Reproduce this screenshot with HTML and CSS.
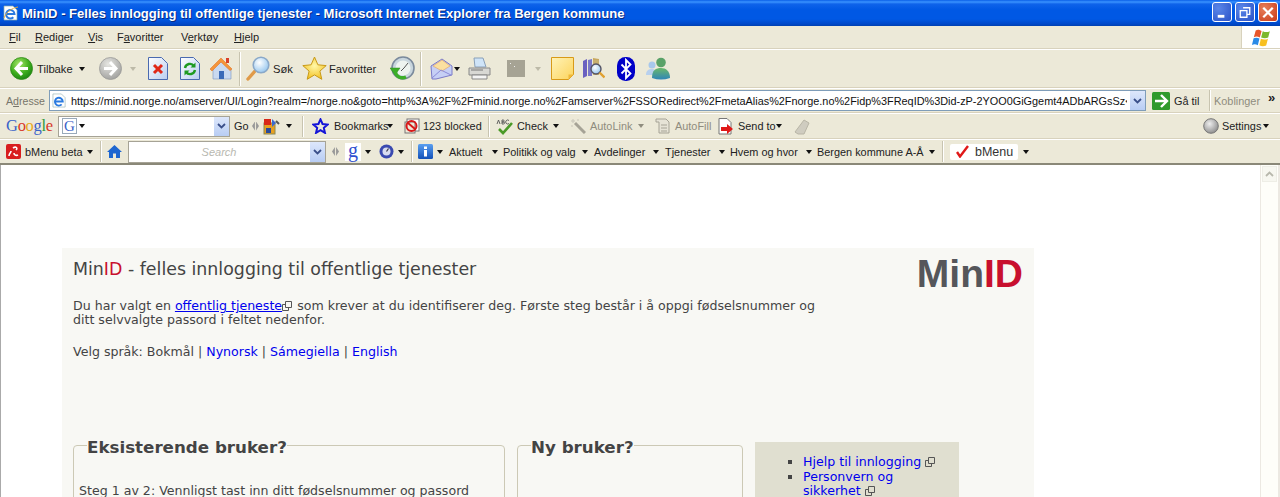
FILE: index.html
```html
<!DOCTYPE html>
<html lang="no">
<head>
<meta charset="utf-8">
<title>MinID</title>
<link rel="stylesheet" href="styles.css">
</head>
<body>
<svg class="defs" width="0" height="0" aria-hidden="true">
  <defs>
    <radialGradient id="gGreen" cx=".4" cy=".3" r=".8"><stop offset="0" stop-color="#a8e66a"/><stop offset=".55" stop-color="#3fae1e"/><stop offset="1" stop-color="#127a10"/></radialGradient>
    <radialGradient id="gGrey" cx=".4" cy=".3" r=".8"><stop offset="0" stop-color="#e6e6e2"/><stop offset="1" stop-color="#9a9a98"/></radialGradient>
    <linearGradient id="gDoc" x1="0" y1="0" x2="1" y2="1"><stop offset="0" stop-color="#fff"/><stop offset="1" stop-color="#b9cdf0"/></linearGradient>
    <radialGradient id="gStar" cx=".5" cy=".4" r=".7"><stop offset="0" stop-color="#fff8a8"/><stop offset="1" stop-color="#f2b90e"/></radialGradient>
    <linearGradient id="gNote" x1="0" y1="0" x2="1" y2="1"><stop offset="0" stop-color="#fff3b8"/><stop offset="1" stop-color="#fcd45c"/></linearGradient>
    <radialGradient id="gLens" cx=".4" cy=".35" r=".7"><stop offset="0" stop-color="#fff"/><stop offset="1" stop-color="#92c4ee"/></radialGradient>
    <radialGradient id="gKnob" cx=".4" cy=".35" r=".7"><stop offset="0" stop-color="#eee"/><stop offset="1" stop-color="#8a8a8a"/></radialGradient>
    <linearGradient id="gBlue" x1="0" y1="0" x2="0" y2="1"><stop offset="0" stop-color="#5a9ff0"/><stop offset="1" stop-color="#1250b8"/></linearGradient>
    <linearGradient id="gMsn" x1="0" y1="0" x2="0" y2="1"><stop offset="0" stop-color="#6ab86a"/><stop offset="1" stop-color="#2f86b8"/></linearGradient>
  </defs>
</svg>
<div class="window">
  <header class="titlebar">
    <svg class="ti-icon" width="16" height="16" viewBox="0 0 16 16"><path d="M1 1h9l4 4v10H1z" fill="#fff" stroke="#8aa" stroke-width=".7"/><path d="M3.500 9h8a4.200 4.200 0 1 0-1.200 3.200" fill="none" stroke="#2a7ae0" stroke-width="2"/><path d="M1 13C3 7 9 3 15 2" fill="none" stroke="#f0b030" stroke-width=".9"/></svg>
    <span class="ti-text">MinID - Felles innlogging til offentlige tjenester - Microsoft Internet Explorer fra Bergen kommune</span>
    <div class="ti-buttons">
      <span class="wbtn"><svg width="18" height="19" viewBox="0 0 19 19"><rect x="5" y="12" width="7" height="3" fill="#fff"/></svg></span>
      <span class="wbtn"><svg width="18" height="19" viewBox="0 0 19 19"><path d="M7.500 4.500h7v7h-3M4.500 7.500h7v7h-7z" fill="none" stroke="#fff" stroke-width="1.400"/></svg></span>
      <span class="wbtn close"><svg width="18" height="19" viewBox="0 0 19 19"><path d="M4.500 4.500l10 10M14.500 4.500l-10 10" stroke="#fff" stroke-width="2.400"/></svg></span>
    </div>
  </header>

  <nav class="menubar">
    <span class="m-fil"><u>F</u>il</span>
    <span class="m-red"><u>R</u>ediger</span>
    <span class="m-vis"><u>V</u>is</span>
    <span class="m-fav">F<u>a</u>voritter</span>
    <span class="m-ver">V<u>e</u>rktøy</span>
    <span class="m-hje"><u>H</u>jelp</span>
    <span class="flagbox"><svg width="20" height="19" viewBox="0 0 17 16"><path d="M4 2c2-1 3-.5 5 .4L7.500 8C5.500 7 4 7 2.400 7.800z" fill="#e8562a"/><path d="M10 2.600c2 1 4 1 6 0L14.600 8c-2 1-4 .8-6 0z" fill="#7cb82c"/><path d="M2.200 8.600C4 8 5.500 8 7.200 8.900L5.800 14.500C4 13.500 2.500 13.500 .8 14.300z" fill="#2a8ae6"/><path d="M8.400 9c2 .9 4 1 6 0l-1.500 5.700c-2 1-4 .9-5.800-.1z" fill="#f8c020"/></svg></span>
  </nav>

  <div class="bar toolbar">
    <svg width="23" height="23" viewBox="0 0 23 23"><circle cx="11.500" cy="11.500" r="11" fill="url(#gGreen)" stroke="#2f8a18" stroke-width=".8"/><path d="M12 5l-6 6.500 6 6.500M6.500 11.500H18" fill="none" stroke="#fff" stroke-width="3"/></svg>
    <span>Tilbake</span>
    <i class="arr"></i>
    <svg width="23" height="23" viewBox="0 0 23 23"><circle cx="11.500" cy="11.500" r="11" fill="url(#gGrey)" stroke="#9a9a98" stroke-width=".8"/><path d="M11 5l6 6.500-6 6.500M16.500 11.500H5" fill="none" stroke="#fff" stroke-width="3"/></svg>
    <i class="arr off"></i>
    <svg width="20" height="23" viewBox="0 0 20 23"><path d="M.500.500h13l6 6v16H.500z" fill="url(#gDoc)" stroke="#4a6ab0"/><path d="M6 8l8 8M14 8l-8 8" stroke="#e02818" stroke-width="3"/></svg>
    <svg width="20" height="23" viewBox="0 0 20 23"><path d="M.500.500h13l6 6v16H.500z" fill="url(#gDoc)" stroke="#4a6ab0"/><path d="M5 11a5 5 0 0 1 9-2M15 13a5 5 0 0 1-9 2" fill="none" stroke="#1f9a22" stroke-width="2.400"/><path d="M15.500 5.500v5h-5zM4.500 18.500v-5h5z" fill="#1f9a22"/></svg>
    <svg width="24" height="24" viewBox="0 0 24 24"><path d="M4 11l9-7 9 8v10H4z" fill="#c9d9f0" stroke="#7a94c0" stroke-width=".6"/><path d="M1 12L12 1l11 11-2 1.500L12 5 3 14z" fill="#f5953a" stroke="#e0762a" stroke-width=".6"/><rect x="17" y="1" width="3" height="5" fill="#d8402a"/><rect x="10" y="14" width="5" height="8" fill="#3a6ab8"/></svg>
    <i class="vsep tall"></i>
    <svg width="25" height="25" viewBox="0 0 25 25"><path d="M9 15l-7 8" stroke="#e09a48" stroke-width="3.400" stroke-linecap="round"/><circle cx="15" cy="9" r="7.800" fill="url(#gLens)" stroke="#8aa8c8" stroke-width="1.600"/></svg>
    <span>Søk</span>
    <svg width="25" height="25" viewBox="0 0 25 25"><path d="M12.500 1l3.400 7.800 8.300.8-6.300 5.500 1.900 8.200-7.300-4.400-7.300 4.400 1.900-8.200L.800 9.600l8.300-.8z" fill="url(#gStar)" stroke="#c89a18"/></svg>
    <span>Favoritter</span>
    <svg width="25" height="25" viewBox="0 0 25 25"><circle cx="13" cy="12" r="11" fill="#c9d6de" stroke="#7b8a9c" stroke-width="1.600"/><circle cx="13" cy="12" r="7.500" fill="#eef3f0"/><path d="M14 12l4-5M14 12l-3 3" stroke="#555" stroke-width="1"/><path d="M0 12l5 7 5-7z" fill="#3cae28" stroke="#2a8a1c" stroke-width=".5"/><path d="M5 15c1 6 6 8 11 6" fill="none" stroke="#3cae28" stroke-width="3.400"/></svg>
    <i class="vsep tall"></i>
    <svg width="23" height="23" viewBox="0 0 23 23"><path d="M1 9L12 2l10 7v9L6 22H2z" fill="#c6cff5" stroke="#7a7ac8"/><path d="M3 9l9-6 8 6-8 5z" fill="#fbe0a0" stroke="#e0a060" stroke-width=".6"/><path d="M2 21l9-8 10 5" fill="none" stroke="#8a8ad8"/></svg>
    <i class="arr"></i>
    <svg width="25" height="25" viewBox="0 0 25 25"><path d="M7 2h9l3 9H8z" fill="#cfe4f8" stroke="#8aa0b8"/><path d="M2 12h21v7H2z" fill="#d8d8d4" stroke="#888"/><path d="M5 19h15v4H5z" fill="#f4f4f4" stroke="#888"/><path d="M4 14h12" stroke="#777"/></svg>
    <svg width="18" height="17" viewBox="0 0 18 17"><rect width="18" height="17" fill="#a6a394"/><path d="M3 3h1v1H3zM7 6h1v1H7z" fill="#eee"/></svg>
    <i class="arr off"></i>
    <svg width="23" height="23" viewBox="0 0 23 23"><path d="M.500.500h22v17l-5 5H.500z" fill="url(#gNote)" stroke="#d89a18"/><path d="M22.500 17.500h-5v5z" fill="#f0b838"/></svg>
    <svg width="23" height="23" viewBox="0 0 23 23"><path d="M1 4l4-2v17l-4 2z" fill="#6a60c0"/><path d="M6 3l4-1v17H6z" fill="#7a78c8"/><path d="M11 1l6 1v8h-6z" fill="#c8a860"/><rect x="11" y="3" width="6" height="15" fill="#c8b070"/><circle cx="14" cy="12" r="5" fill="url(#gLens)" stroke="#556" stroke-width="1.400"/><path d="M17.500 15.500l5 5" stroke="#e0a030" stroke-width="2.400"/></svg>
    <svg width="18" height="24" viewBox="0 0 18 24"><rect width="18" height="24" rx="8.500" fill="#0000c8"/><path d="M4.500 7.500l9 9-4.500 4.500V3l4.500 4.500-9 9" fill="none" stroke="#fff" stroke-width="1.800"/></svg>
    <svg width="25" height="23" viewBox="0 0 25 23"><circle cx="6" cy="8" r="3.500" fill="#a8c8ec"/><path d="M0 18c0-5 3-6 6-6s5 2 5 6z" fill="#b8d0ee"/><circle cx="15" cy="5.500" r="4.800" fill="#5aa268"/><path d="M6 21c0-8 4-10 9-10s9 3 9 10c-6 2-12 2-18 0z" fill="url(#gMsn)"/></svg>
  </div>

  <div class="bar addressbar">
    <span class="addr-label">A<u>d</u>resse</span>
    <div class="combo url-box">
      <svg width="15" height="15" viewBox="0 0 16 16"><path d="M1 1h9l4 4v10H1z" fill="#fff" stroke="#8aa" stroke-width=".6"/><path d="M3.500 9h8a4.200 4.200 0 1 0-1.200 3.200" fill="none" stroke="#2a7ae0" stroke-width="2"/></svg>
      <span class="url-text">https://minid.norge.no/amserver/UI/Login?realm=/norge.no&amp;goto=http%3A%2F%2Fminid.norge.no%2Famserver%2FSSORedirect%2FmetaAlias%2Fnorge.no%2Fidp%3FReqID%3Did-zP-2YOO0GiGgemt4ADbARGsSz&lt;</span>
      <span class="drop"><svg width="9" height="6" viewBox="0 0 9 6"><path d="M1 1l3.500 3.500L8 1" fill="none" stroke="#3a4f8a" stroke-width="1.800"/></svg></span>
    </div>
    <svg width="18" height="18" viewBox="0 0 18 18"><rect width="18" height="18" rx="1.500" fill="#2f9a2c"/><path d="M9 3l6 6-6 6M14 9H3" fill="none" stroke="#fff" stroke-width="2.400"/></svg>
    <span>Gå til</span>
    <i class="vsep"></i>
    <span class="dim">Koblinger</span>
    <span class="more">»</span>
  </div>

  <div class="bar googlebar">
    <span class="glogo"><b class="c1">G</b><b class="c2">o</b><b class="c3">o</b><b class="c1">g</b><b class="c4">l</b><b class="c2">e</b></span>
    <div class="combo g-box">
      <span class="g-mark">G</span><i class="arr"></i>
      <span class="drop"><svg width="9" height="6" viewBox="0 0 9 6"><path d="M1 1l3.500 3.500L8 1" fill="none" stroke="#3a4f8a" stroke-width="1.800"/></svg></span>
    </div>
    <span>Go</span>
    <i class="grip"></i>
    <svg width="17" height="17" viewBox="0 0 17 17"><rect x="1" y="5" width="11" height="11" fill="#e8a020" stroke="#885"/><rect x="1" y="1" width="7" height="6" fill="#d82818"/><path d="M9 1l4 4-4 4" fill="#3a6ad0"/><rect x="3" y="10" width="5" height="5" fill="#2a4a9a"/><path d="M13 3l3 3" stroke="#555" stroke-width="2"/></svg>
    <i class="arr"></i>
    <i class="vsep"></i>
    <svg width="17" height="16" viewBox="0 0 25 24"><path d="M12.500 2l3.100 7 7.600.8-5.700 5 1.700 7.500-6.700-4-6.700 4 1.700-7.500-5.700-5L9.400 9z" fill="none" stroke="#1414d8" stroke-width="3"/></svg>
    <span>Bookmarks</span>
    <i class="arr"></i>
    <svg width="16" height="16" viewBox="0 0 16 16"><rect x="3" y="1" width="12" height="12" fill="#fff" stroke="#777"/><rect x="1" y="4" width="10" height="11" fill="#f0e8d8" stroke="#777"/><circle cx="7.500" cy="8" r="5" fill="none" stroke="#d81818" stroke-width="2"/><path d="M4 5l7 6" stroke="#d81818" stroke-width="2"/></svg>
    <span>123 blocked</span>
    <i class="vsep"></i>
    <svg width="18" height="17" viewBox="0 0 18 17"><path d="M3 11l4 4 9-10" fill="none" stroke="#4a9a28" stroke-width="2.600"/><path d="M1 6l1.500-4L4 6M6 2v4h1.500a1 1 0 0 0 0-2H6M6 4h1.200a1 1 0 0 0 0-2H6M13 2.500a2 2 0 1 0 0 3" fill="none" stroke="#555" stroke-width=".9"/></svg>
    <span>Check</span>
    <i class="arr"></i>
    <svg width="16" height="16" viewBox="0 0 16 16"><path d="M5 5l10 10" stroke="#a6a396" stroke-width="3"/><path d="M3 1v4M1 3h4M8 1v2M1 8h2" stroke="#c8c5b8"/></svg>
    <span class="dim">AutoLink</span>
    <i class="arr off2"></i>
    <svg width="16" height="16" viewBox="0 0 16 16"><path d="M1 1h10l3 3v11H4V4H1z" fill="#e6e3d6" stroke="#a6a396"/><path d="M6 7h6M6 10h6M6 13h6" stroke="#a6a396"/></svg>
    <span class="dim">AutoFill</span>
    <svg width="17" height="17" viewBox="0 0 17 17"><path d="M1 .500h8l4 4V16H1z" fill="#fff" stroke="#777"/><path d="M3 9h6V6l6 5-6 5v-3H3z" fill="#e01818"/></svg>
    <span>Send to</span>
    <i class="arr"></i>
    <svg width="16" height="17" viewBox="0 0 16 17"><path d="M1 14L10 2l5 3-5 11H4z" fill="#cfccc0" stroke="#b8b5a6"/></svg>
    <svg width="16" height="16" viewBox="0 0 16 16"><circle cx="8" cy="8" r="7.300" fill="url(#gKnob)" stroke="#777"/></svg>
    <span>Settings</span>
    <i class="arr"></i>
  </div>

  <div class="bar bmenubar">
    <svg width="15" height="15" viewBox="0 0 15 15"><rect width="15" height="15" rx="2" fill="#d81e1e"/><path d="M3 12c0-3 2-3 2-5M7 4c3-2 5 0 3 2M8 9c0 2 2 3 4 2" fill="none" stroke="#fff" stroke-width="1.600"/></svg>
    <span>bMenu beta</span>
    <i class="arr"></i>
    <i class="vsep"></i>
    <svg width="15" height="15" viewBox="0 0 15 15"><path d="M7.500 1L15 8h-2v6H9V9.500H6V14H2V8H0z" fill="#1e66d0"/></svg>
    <div class="combo s-box">
      <span class="s-text">Search</span>
      <span class="drop"><svg width="9" height="6" viewBox="0 0 9 6"><path d="M1 1l3.500 3.500L8 1" fill="none" stroke="#3a4f8a" stroke-width="1.800"/></svg></span>
    </div>
    <i class="grip"></i>
    <span class="g-tile">g</span>
    <i class="arr"></i>
    <svg width="15" height="15" viewBox="0 0 15 15"><circle cx="7.500" cy="7.500" r="7" fill="#3a4ab0"/><circle cx="7.500" cy="7.500" r="4" fill="#d8dcf0"/><path d="M7.500 7.500l2-3" stroke="#334" stroke-width="1.200"/></svg>
    <i class="arr"></i>
    <i class="vsep"></i>
    <svg width="15" height="15" viewBox="0 0 15 15"><rect width="15" height="15" rx="1.500" fill="url(#gBlue)"/><rect x="6" y="2.500" width="3" height="2.500" fill="#fff"/><rect x="6" y="6" width="3" height="6.500" fill="#fff"/></svg>
    <i class="arr"></i><span>Aktuelt</span>
    <i class="arr"></i><span>Politikk og valg</span>
    <i class="arr"></i><span>Avdelinger</span>
    <i class="arr"></i><span>Tjenester</span>
    <i class="arr"></i><span>Hvem og hvor</span>
    <i class="arr"></i><span>Bergen kommune A-Å</span>
    <i class="arr"></i>
    <i class="vsep"></i>
    <span class="bm-btn"><svg width="13" height="13" viewBox="0 0 13 13"><path d="M1 7l3 4.500L12 1" fill="none" stroke="#e01818" stroke-width="2.400"/></svg>bMenu</span>
    <i class="arr"></i>
  </div>

  <div class="viewport">
    <main class="page">
      <section class="panel">
        <div class="panel-head">
          <span class="logo">Min<span class="red">ID</span></span>
          <h1>Min<span class="red">ID</span> - felles innlogging til offentlige tjenester</h1>
        </div>
        <p class="intro">Du har valgt en <a href="#" class="ul">offentlig tjeneste</a><svg class="ext" width="10" height="10" viewBox="0 0 10 10"><path d="M3.500 .5h6v6h-6zM3.500 3.500h-3v6h6v-3" fill="none" stroke="#555"/></svg> som krever at du identifiserer deg. Første steg består i å oppgi fødselsnummer og ditt selvvalgte passord i feltet nedenfor.</p>
        <p class="lang">Velg språk: Bokmål | <a href="#">Nynorsk</a> | <a href="#">Sámegiella</a> | <a href="#">English</a></p>
        <div class="columns">
          <fieldset class="box box-main">
            <legend>Eksisterende bruker?</legend>
            <p class="step">Steg 1 av 2: Vennligst tast inn ditt fødselsnummer og passord</p>
          </fieldset>
          <fieldset class="box box-new">
            <legend>Ny bruker?</legend>
          </fieldset>
          <aside class="side">
            <ul>
              <li><a href="#">Hjelp til innlogging</a> <svg class="ext" width="10" height="10" viewBox="0 0 10 10"><path d="M3.500 .5h6v6h-6zM3.500 3.500h-3v6h6v-3" fill="none" stroke="#555"/></svg></li>
              <li><a href="#">Personvern og sikkerhet</a> <svg class="ext" width="10" height="10" viewBox="0 0 10 10"><path d="M3.500 .5h6v6h-6zM3.500 3.500h-3v6h6v-3" fill="none" stroke="#555"/></svg></li>
            </ul>
          </aside>
        </div>
      </section>
    </main>
    <div class="scrollbar"><span class="sb-up"><svg width="9" height="6" viewBox="0 0 9 6"><path d="M1 5l3.500-3.500L8 5" fill="none" stroke="#b8b8ac" stroke-width="1.800"/></svg></span></div>
  </div>
</div>
</body>
</html>
```
FILE: styles.css
```css
* { box-sizing: border-box; }
html, body { margin: 0; height: 497px; overflow: hidden; background: #fff; }
.defs { position: absolute; }
.window { height: 497px; display: flex; flex-direction: column; font: 10.9px "Liberation Sans", Arial, sans-serif; color: #222; }

.titlebar { height: 26px; flex: none; display: flex; align-items: center; padding: 0 2px 0 3px;
  background: linear-gradient(#0a5fe8 0, #3a93ff 2px, #0f63ea 4px, #0058e4 10px, #0058e4 19px, #0048c8 24px, #0040b0 26px); }
.ti-icon { flex: none; }
.ti-text { margin-left: 3px; color: #fff; font: 700 13.060px "Liberation Sans", sans-serif; white-space: nowrap; text-shadow: 1px 1px 0 #0a2a80; }
.ti-buttons { margin-left: auto; margin-bottom: 2px; display: flex; gap: 3px; }
.wbtn { width: 20px; height: 20px; display: flex; align-items: center; justify-content: center; border: 1px solid #fff; border-radius: 3px;
  background: radial-gradient(circle at 30% 30%, #5a86e8, #2a52c8); }
.wbtn.close { background: radial-gradient(circle at 30% 30%, #e8805a, #c83a18); }

.menubar { height: 23px; flex: none; display: flex; align-items: center; background: #ece9d8; border-bottom: 1px solid #d8d2bd; padding-left: 9px; font-size: 11px; }
.m-fil { width: 26px; } .m-red { width: 53px; } .m-vis { width: 29px; } .m-fav { width: 64px; } .m-ver { width: 53px; }
.flagbox { margin-left: auto; width: 39px; height: 22px; background: #fff; display: flex; align-items: center; justify-content: center; border-left: 1px solid #d8d2bd; }

.bar { flex: none; display: grid; align-items: center; white-space: nowrap; background: #ece9d8; }
.toolbar { height: 39px; padding-left: 10px; border-top: 1px solid #fff; border-bottom: 1px solid #d8d2bd; font-size: 11.2px;
  grid-template-columns: 27px 42px 20px 31px 18px 32px 29px 30px 7px 27px 29px 27px 61px 30px 10px 24px 13px 40px 28px 16px 31px 35px 29px auto; }
.addressbar { height: 25px; padding-left: 6px; border-top: 1px solid #fff; border-bottom: 1px solid #d8d2bd;
  grid-template-columns: 43px 1103px 22px 35px 5px 54px auto; }
.googlebar { height: 26px; padding-left: 6px; border-top: 1px solid #fff; border-bottom: 1px solid #d8d2bd;
  grid-template-columns: 52px 176px 18px 11px 23px 16px 10px 22px 53px 17px 19px 65px 8px 21px 36px 17px 20px 48px 17px 20px 43px 20px 38px 18px 409px 19px 41px auto; }
.bmenubar { height: 24px; padding-left: 6px; border-top: 1px solid #fff;
  grid-template-columns: 19px 62px 13px 7px 21px 204px 13px 20px 14px 19px 13px 7px 19px 12px 43px 11px 79px 12px 59px 12px 54px 11px 76px 11px 112px 13px 8px 73px auto; }

.arr { display: block; width: 0; height: 0; border-style: solid; border-width: 4px 3.500px 0; border-color: #111 transparent transparent; }
.arr.off { border-top-color: #bdbaa8; }
.arr.off2 { border-top-color: #8f8c7e; }
.vsep { display: block; width: 1px; height: 21px; background: #c8c4b0; box-shadow: 1px 0 0 #fff; }
.vsep.tall { height: 34px; }
.grip { display: block; width: 7px; height: 9px; background: #999; clip-path: polygon(0 50%, 42% 0, 42% 100%, 58% 100%, 58% 0, 100% 50%, 58% 100%, 42% 100%); }
.dim { color: #8f8c7e; }

.combo { position: relative; display: flex; align-items: center; background: #fff; border: 1px solid #7f9db9; }
.drop { position: absolute; right: 0; top: 0; bottom: 0; width: 16px; display: flex; align-items: center; justify-content: center;
  background: linear-gradient(#dde7fb, #b8cdf4); border-left: 1px solid #fff; }
.url-box { width: 1097px; height: 21px; padding-left: 2px; }
.url-text { margin-left: 4px; width: 1056px; overflow: hidden; color: #111; font-size: 10.880px; }
.addr-label { color: #77756a; font-size: 10.600px; }
.more { font-weight: 700; font-size: 13px; margin-top: -6px; color: #222; }

.glogo { font: 400 16.500px "Liberation Serif", serif; letter-spacing: -.3px; }
.glogo b { font-weight: 400; }
.c1 { color: #3a62c8; } .c2 { color: #d8382a; } .c3 { color: #e8a818; } .c4 { color: #2f9a3a; }
.g-box { width: 172px; height: 21px; padding-left: 3px; border-color: #a6a396; }
.g-mark { width: 15px; height: 16px; border: 1px solid #9ab; font: 15px/14px "Liberation Serif", serif; color: #3a62c8; text-align: center; margin-right: 2px; }

.s-box { width: 198px; height: 22px; border-color: #a6a396; justify-content: center; padding-right: 16px; }
.s-text { font-style: italic; font-size: 11px; color: #b8b8b0; }
.g-tile { width: 16px; height: 18px; background: #fff; color: #3050d0; font: 400 20px/14px "Liberation Serif", serif; text-align: center; }
.bm-btn { width: 68px; height: 16px; background: #fff; border-radius: 2px; display: flex; align-items: center; gap: 6px; padding-left: 6px; font: 12.500px "Liberation Sans", sans-serif; color: #333; }

.viewport { flex: 1; min-height: 0; display: flex; border-top: 2px solid #8a8878; overflow: hidden; }
.page { flex: 1; min-width: 0; border-left: 1px solid #aaa; border-right: 1px solid #ece9e2; padding: 83px 0 0 61px; font: 12.600px/14px "DejaVu Sans", Verdana, sans-serif; color: #444; overflow: hidden; }
.scrollbar { width: 19px; flex: none; background: #fefef9; border-right: 2px solid #ece9e2; padding: 1px 0 0 1px; }
.sb-up { width: 15px; height: 16px; display: flex; align-items: center; justify-content: center; background: #f7f7f0; border: 1px solid #eeeee6; }

.panel { width: 972px; height: 400px; background: #f8f8f4; padding: 11px 11px 0; }
.panel-head { display: flow-root; }
.logo { float: right; font: 700 39px/26px "Liberation Sans", sans-serif; color: #55565a; margin-top: 2px; }
h1 { margin: 0; font: 400 17.400px/20px "DejaVu Sans", Verdana, sans-serif; color: #444; }
.red { color: #c8102e; }
.intro { margin: 12px 0 0; width: 760px; }
.lang { margin: 18px 0 0; }
a { color: #0000ee; text-decoration: none; }
a.ul { text-decoration: underline; }
.ext { vertical-align: -1px; margin-right: 1px; }
.columns { display: flex; margin-top: 83px; align-items: flex-start; }
.box { margin: 0; padding: 0 0 0 5px; height: 200px; border: 1px solid #ccc9b5; border-radius: 4px; min-width: 0; }
.box legend { padding: 4px 0 0; margin-left: 8px; font: 700 16.700px/20px "DejaVu Sans", Verdana, sans-serif; color: #444; }
.box-main { width: 432px; margin-top: -9px; }
.box-new { width: 226px; margin: -9px 12px 0; }
.step { margin: 27px 0 0; }
.side { width: 204px; height: 200px; background: #e0dfd0; padding: 13px 0 0; }
.side ul { margin: 0; padding: 0 20px 0 48px; list-style: square; line-height: 14.500px; }
.side li::marker { color: #444; }
```
